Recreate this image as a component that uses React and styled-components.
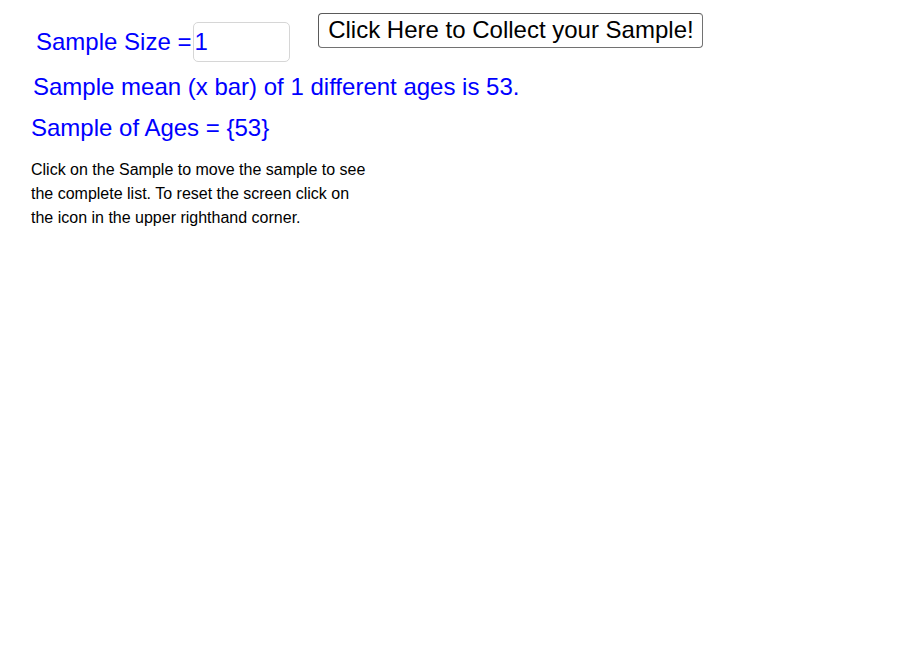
import React from "react";
import styled, { createGlobalStyle } from "styled-components";

const Global = createGlobalStyle`
  html, body { margin: 0; padding: 0; background: #ffffff; }
  body { font-family: "Liberation Sans", Arial, sans-serif; }
  * { box-sizing: border-box; }
`;

const Canvas = styled.div`
  width: 900px;
  height: 647px;
  background: #ffffff;
  padding-top: 13px;
  overflow: hidden;
`;

const TopRow = styled.div`
  display: flex;
  align-items: flex-start;
`;

const SizeGroup = styled.div`
  display: flex;
  align-items: center;
  margin-left: 36px;
  margin-top: 9px;
`;

const BlueText = styled.div`
  color: #0000ff;
  font-size: 24px;
  line-height: ${(p) => p.$lh || "normal"};
  margin-left: ${(p) => p.$left || 0}px;
  margin-top: ${(p) => p.$top || 0}px;
  white-space: nowrap;
`;

const SizeInput = styled.input`
  width: 97px;
  height: 40px;
  border: 1px solid #d6d6d6;
  border-radius: 5px;
  background: #ffffff;
  color: #0000ff;
  font-family: "Liberation Sans", Arial, sans-serif;
  font-size: 24px;
  padding: 0;
  margin: 0 0 0 2px;
  outline: none;
`;

const CollectButton = styled.button`
  margin-left: 28px;
  width: 385px;
  height: 35px;
  border: 1px solid #727272;
  border-top-color: #5a5a5a;
  border-left-color: #5a5a5a;
  border-radius: 4px;
  background: #ffffff;
  color: #000000;
  font-family: "Liberation Sans", Arial, sans-serif;
  font-size: 24px;
  padding: 0 0 2px;
  display: flex;
  align-items: center;
  justify-content: center;
  white-space: nowrap;
  cursor: pointer;
`;

const Instructions = styled.p`
  margin: 16px 0 0 31px;
  font-size: 16px;
  line-height: 24px;
  color: #000000;
`;

export default function App() {
  return (
    <>
      <Global />
      <Canvas>
        <TopRow>
          <SizeGroup>
            <BlueText>Sample Size =</BlueText>
            <SizeInput defaultValue="1" />
          </SizeGroup>
          <CollectButton>Click Here to Collect your Sample!</CollectButton>
        </TopRow>
        <BlueText $lh="28px" $left={33} $top={11}>
          Sample mean (x bar) of 1 different ages is 53.
        </BlueText>
        <BlueText $lh="28px" $left={31} $top={13}>
          Sample of Ages = {"{53}"}
        </BlueText>
        <Instructions>
          Click on the Sample to move the sample to see
          <br />
          the complete list. To reset the screen click on
          <br />
          the icon in the upper righthand corner.
        </Instructions>
      </Canvas>
    </>
  );
}
